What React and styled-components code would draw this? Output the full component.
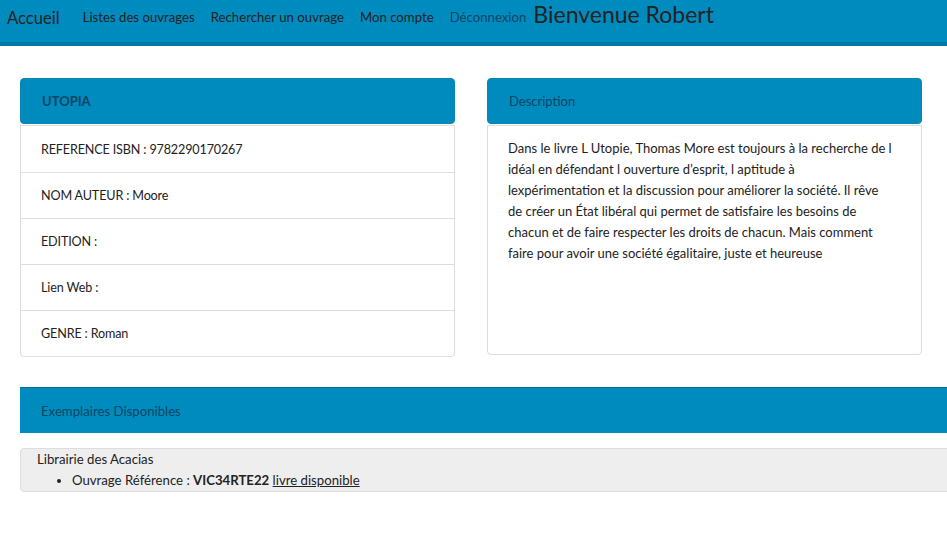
import React from 'react'
import styled, { createGlobalStyle } from 'styled-components'

const GlobalStyle = createGlobalStyle`
  * { box-sizing: border-box; }
  body {
    margin: 0;
    font-family: Lato, "Liberation Sans", sans-serif;
    font-size: 14px;
    color: #222;
    background: #fff;
    overflow-x: hidden;
  }
`

const fields = [
  'REFERENCE ISBN : 9782290170267',
  'NOM AUTEUR : Moore',
  'EDITION :',
  'Lien Web :',
  'GENRE : Roman',
]

// lines broken as in the original layout
const description = [
  'Dans le livre L Utopie, Thomas More est toujours à la recherche de l',
  'idéal en défendant l ouverture d’esprit, l aptitude à',
  'lexpérimentation et la discussion pour améliorer la société. Il rêve',
  'de créer un État libéral qui permet de satisfaire les besoins de',
  'chacun et de faire respecter les droits de chacun. Mais comment',
  'faire pour avoir une société égalitaire, juste et heureuse',
]

const App = () => {
  return (
    <>
      <GlobalStyle />
      <NavBar>
        <Brand>Accueil</Brand>
        <NavLinks>
          <NavLink>Listes des ouvrages</NavLink>
          <NavLink>Rechercher un ouvrage</NavLink>
          <NavLink>Mon compte</NavLink>
          <NavLink $muted>Déconnexion</NavLink>
        </NavLinks>
        <Welcome>Bienvenue Robert</Welcome>
      </NavBar>

      <Main>
        <Columns>
          <Panel>
            <PanelHead $bold>UTOPIA</PanelHead>
            <PanelBody>
              {fields.map((f) => (
                <Row key={f}>{f}</Row>
              ))}
            </PanelBody>
          </Panel>
          <Panel>
            <PanelHead>Description</PanelHead>
            <DescBody>
              {description.map((line, i) => (
                <React.Fragment key={i}>
                  {line}
                  {i < description.length - 1 && <br />}
                </React.Fragment>
              ))}
            </DescBody>
          </Panel>
        </Columns>

        <Copies>
          <CopiesHead>Exemplaires Disponibles</CopiesHead>
          <Shop>
            Librairie des Acacias
            <CopyList>
              <li>
                Ouvrage Référence : <strong>VIC34RTE22</strong> <u>livre disponible</u>
              </li>
            </CopyList>
          </Shop>
        </Copies>
      </Main>
    </>
  )
}

export default App

const NavBar = styled.nav`
  height: 46px;
  background: #008bbf;
  border-bottom: 4px solid #0079a6;
  display: flex;
  align-items: flex-start;
  padding: 0 0 0 7px;
`

const Brand = styled.div`
  font-size: 16.6px;
  line-height: 18px;
  padding-top: 9px;
  color: #222;
  margin-right: 23px;
`

const NavLinks = styled.div`
  display: flex;
  gap: 16px;
  padding-top: 9px;
`

const NavLink = styled.a`
  font-size: 13.2px;
  line-height: 16px;
  color: ${(p) => (p.$muted ? '#124662' : '#222')};
  cursor: pointer;
`

const Welcome = styled.h1`
  margin: 0 0 0 7px;
  font-size: 23px;
  font-weight: 400;
  line-height: 28px;
  color: #222;
`

const Main = styled.main`
  padding: 32px 0 0 20px;
`

const Columns = styled.div`
  display: grid;
  grid-template-columns: 435px 435px;
  column-gap: 32px;
`

const Panel = styled.section`
  display: flex;
  flex-direction: column;
`

const PanelHead = styled.div`
  height: 46px;
  background: #008bbf;
  border: 1px solid #0a84b2;
  border-radius: 4px;
  display: flex;
  align-items: center;
  padding: 0 21px;
  font-size: 13px;
  font-weight: ${(p) => (p.$bold ? 700 : 400)};
  color: #0a4563;
`

const PanelBody = styled.div`
  margin-top: 1px;
  border: 1px solid #ddd;
  border-radius: 0 0 4px 4px;
  background: #fff;
`

const Row = styled.div`
  height: 46px;
  display: flex;
  align-items: center;
  padding: 0 20px;
  font-size: 12.6px;
  letter-spacing: -0.15px;
  color: #222;
  & + & {
    border-top: 1px solid #ddd;
  }
`

const DescBody = styled(PanelBody)`
  height: 230px;
  padding: 12px 20px;
  font-size: 13px;
  line-height: 21px;
  white-space: nowrap;
  color: #222;
`

const Copies = styled.div`
  margin-top: 30px;
  width: 960px;
`

const CopiesHead = styled.div`
  height: 46px;
  background: #008bbf;
  border-top: 1px solid #0a6f95;
  display: flex;
  align-items: center;
  padding: 0 21px;
  font-size: 13.2px;
  color: #0a4563;
`

const Shop = styled.div`
  margin-top: 15px;
  background: #eee;
  border: 1px solid #ddd;
  border-radius: 4px;
  padding: 0 16px;
  font-size: 13.2px;
  line-height: 21px;
  color: #222;
`

const CopyList = styled.ul`
  margin: 0;
  padding-left: 35px;
`
